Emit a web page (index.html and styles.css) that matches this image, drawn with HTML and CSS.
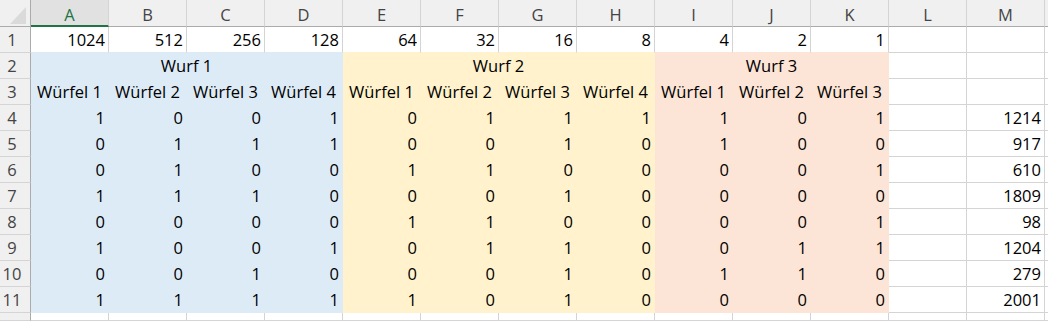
FILE: index.html
```html
<!DOCTYPE html>
<html lang="de">
<head>
<meta charset="utf-8">
<title>Würfel</title>
<link rel="stylesheet" href="styles.css">
</head>
<body>
<div class="sheet">
  <div class="corner"><span class="tri"></span></div>
  <div class="ch sel">A</div><div class="ch">B</div><div class="ch">C</div><div class="ch">D</div><div class="ch">E</div><div class="ch">F</div><div class="ch">G</div><div class="ch">H</div><div class="ch">I</div><div class="ch">J</div><div class="ch">K</div><div class="ch">L</div><div class="ch">M</div><div class="ch last"></div>

  <div class="rh">1</div>
  <div class="c n ub">1024</div><div class="c n ub">512</div><div class="c n ub">256</div><div class="c n ub">128</div>
  <div class="c n uy">64</div><div class="c n uy">32</div><div class="c n uy">16</div><div class="c n uy">8</div>
  <div class="c n uo">4</div><div class="c n uo">2</div><div class="c n uo">1</div>
  <div class="c"></div><div class="c"></div><div class="c e"></div>

  <div class="rh">2</div>
  <div class="c t b s4">Wurf 1</div>
  <div class="c t y s4">Wurf 2</div>
  <div class="c t o s3">Wurf 3</div>
  <div class="c"></div><div class="c"></div><div class="c e"></div>

  <div class="rh">3</div>
  <div class="c t b">Würfel 1</div><div class="c t b">Würfel 2</div><div class="c t b">Würfel 3</div><div class="c t b">Würfel 4</div>
  <div class="c t y">Würfel 1</div><div class="c t y">Würfel 2</div><div class="c t y">Würfel 3</div><div class="c t y">Würfel 4</div>
  <div class="c t o">Würfel 1</div><div class="c t o">Würfel 2</div><div class="c t o">Würfel 3</div>
  <div class="c"></div><div class="c"></div><div class="c e"></div>

  <div class="rh">4</div>
  <div class="c n b">1</div><div class="c n b">0</div><div class="c n b">0</div><div class="c n b">1</div>
  <div class="c n y">0</div><div class="c n y">1</div><div class="c n y">1</div><div class="c n y">1</div>
  <div class="c n o">1</div><div class="c n o">0</div><div class="c n o">1</div>
  <div class="c"></div><div class="c n">1214</div><div class="c e"></div>

  <div class="rh">5</div>
  <div class="c n b">0</div><div class="c n b">1</div><div class="c n b">1</div><div class="c n b">1</div>
  <div class="c n y">0</div><div class="c n y">0</div><div class="c n y">1</div><div class="c n y">0</div>
  <div class="c n o">1</div><div class="c n o">0</div><div class="c n o">0</div>
  <div class="c"></div><div class="c n">917</div><div class="c e"></div>

  <div class="rh">6</div>
  <div class="c n b">0</div><div class="c n b">1</div><div class="c n b">0</div><div class="c n b">0</div>
  <div class="c n y">1</div><div class="c n y">1</div><div class="c n y">0</div><div class="c n y">0</div>
  <div class="c n o">0</div><div class="c n o">0</div><div class="c n o">1</div>
  <div class="c"></div><div class="c n">610</div><div class="c e"></div>

  <div class="rh">7</div>
  <div class="c n b">1</div><div class="c n b">1</div><div class="c n b">1</div><div class="c n b">0</div>
  <div class="c n y">0</div><div class="c n y">0</div><div class="c n y">1</div><div class="c n y">0</div>
  <div class="c n o">0</div><div class="c n o">0</div><div class="c n o">0</div>
  <div class="c"></div><div class="c n">1809</div><div class="c e"></div>

  <div class="rh">8</div>
  <div class="c n b">0</div><div class="c n b">0</div><div class="c n b">0</div><div class="c n b">0</div>
  <div class="c n y">1</div><div class="c n y">1</div><div class="c n y">0</div><div class="c n y">0</div>
  <div class="c n o">0</div><div class="c n o">0</div><div class="c n o">1</div>
  <div class="c"></div><div class="c n">98</div><div class="c e"></div>

  <div class="rh">9</div>
  <div class="c n b">1</div><div class="c n b">0</div><div class="c n b">0</div><div class="c n b">1</div>
  <div class="c n y">0</div><div class="c n y">1</div><div class="c n y">1</div><div class="c n y">0</div>
  <div class="c n o">0</div><div class="c n o">1</div><div class="c n o">1</div>
  <div class="c"></div><div class="c n">1204</div><div class="c e"></div>

  <div class="rh">10</div>
  <div class="c n b">0</div><div class="c n b">0</div><div class="c n b">1</div><div class="c n b">0</div>
  <div class="c n y">0</div><div class="c n y">0</div><div class="c n y">1</div><div class="c n y">0</div>
  <div class="c n o">1</div><div class="c n o">1</div><div class="c n o">0</div>
  <div class="c"></div><div class="c n">279</div><div class="c e"></div>

  <div class="rh">11</div>
  <div class="c n b">1</div><div class="c n b">1</div><div class="c n b">1</div><div class="c n b">1</div>
  <div class="c n y">1</div><div class="c n y">0</div><div class="c n y">1</div><div class="c n y">0</div>
  <div class="c n o">0</div><div class="c n o">0</div><div class="c n o">0</div>
  <div class="c"></div><div class="c n">2001</div><div class="c e"></div>

  <div class="rh"></div>
  <div class="c"></div><div class="c"></div><div class="c"></div><div class="c"></div>
  <div class="c"></div><div class="c"></div><div class="c"></div><div class="c"></div>
  <div class="c"></div><div class="c"></div><div class="c"></div>
  <div class="c"></div><div class="c"></div><div class="c e"></div>
</div>
</body>
</html>
```

FILE: styles.css
```css
html, body {
  margin: 0;
  padding: 0;
  background: #ffffff;
}

.sheet {
  display: grid;
  grid-template-columns: 31px repeat(13, 78px) 1fr;
  grid-template-rows: 27px repeat(11, 26px) 1fr;
  width: 1048px;
  height: 321px;
  overflow: hidden;
  font-family: "Open Sans", "Liberation Sans", sans-serif;
  font-size: 16.5px;
  color: #000;
}

.sheet > div {
  box-sizing: border-box;
  overflow: hidden;
  white-space: nowrap;
}

.corner {
  position: relative;
  background: #f0f0f0;
  border-right: 1px solid #ababab;
  border-bottom: 1px solid #ababab;
}

.tri {
  position: absolute;
  left: 10px;
  top: 7px;
  width: 16px;
  height: 17px;
  background: #dadada;
  clip-path: polygon(100% 0, 100% 100%, 0 100%);
}

.ch {
  background: #f0f0f0;
  border-right: 1px solid #d4d4d4;
  border-bottom: 1px solid #ababab;
  text-align: center;
  color: #444;
  padding-top: 4px;
  line-height: 22px;
}

.ch.sel {
  background: #e1e1e1;
  color: #217346;
  border-bottom: 2px solid #217346;
}

.ch.last {
  border-right: none;
}

.rh {
  background: #f0f0f0;
  border-right: 1px solid #ababab;
  border-bottom: 1px solid #d4d4d4;
  text-align: center;
  padding-right: 6px;
  color: #444;
  line-height: 25px;
}

.c {
  border-right: 1px solid #d4d4d4;
  border-bottom: 1px solid #d4d4d4;
  line-height: 25px;
}

.c.e {
  border-right: none;
}

.n {
  text-align: right;
  padding-right: 3px;
}

.t {
  text-align: center;
}

.b {
  background: #ddebf7;
  border-color: #ddebf7;
}

.y {
  background: #fff2cc;
  border-color: #fff2cc;
}

.o {
  background: #fce4d6;
  border-color: #fce4d6;
}

.ub { border-bottom-color: #ddebf7; }
.uy { border-bottom-color: #fff2cc; }
.uo { border-bottom-color: #fce4d6; }

.s4 { grid-column: span 4; }
.s3 { grid-column: span 3; }
```
